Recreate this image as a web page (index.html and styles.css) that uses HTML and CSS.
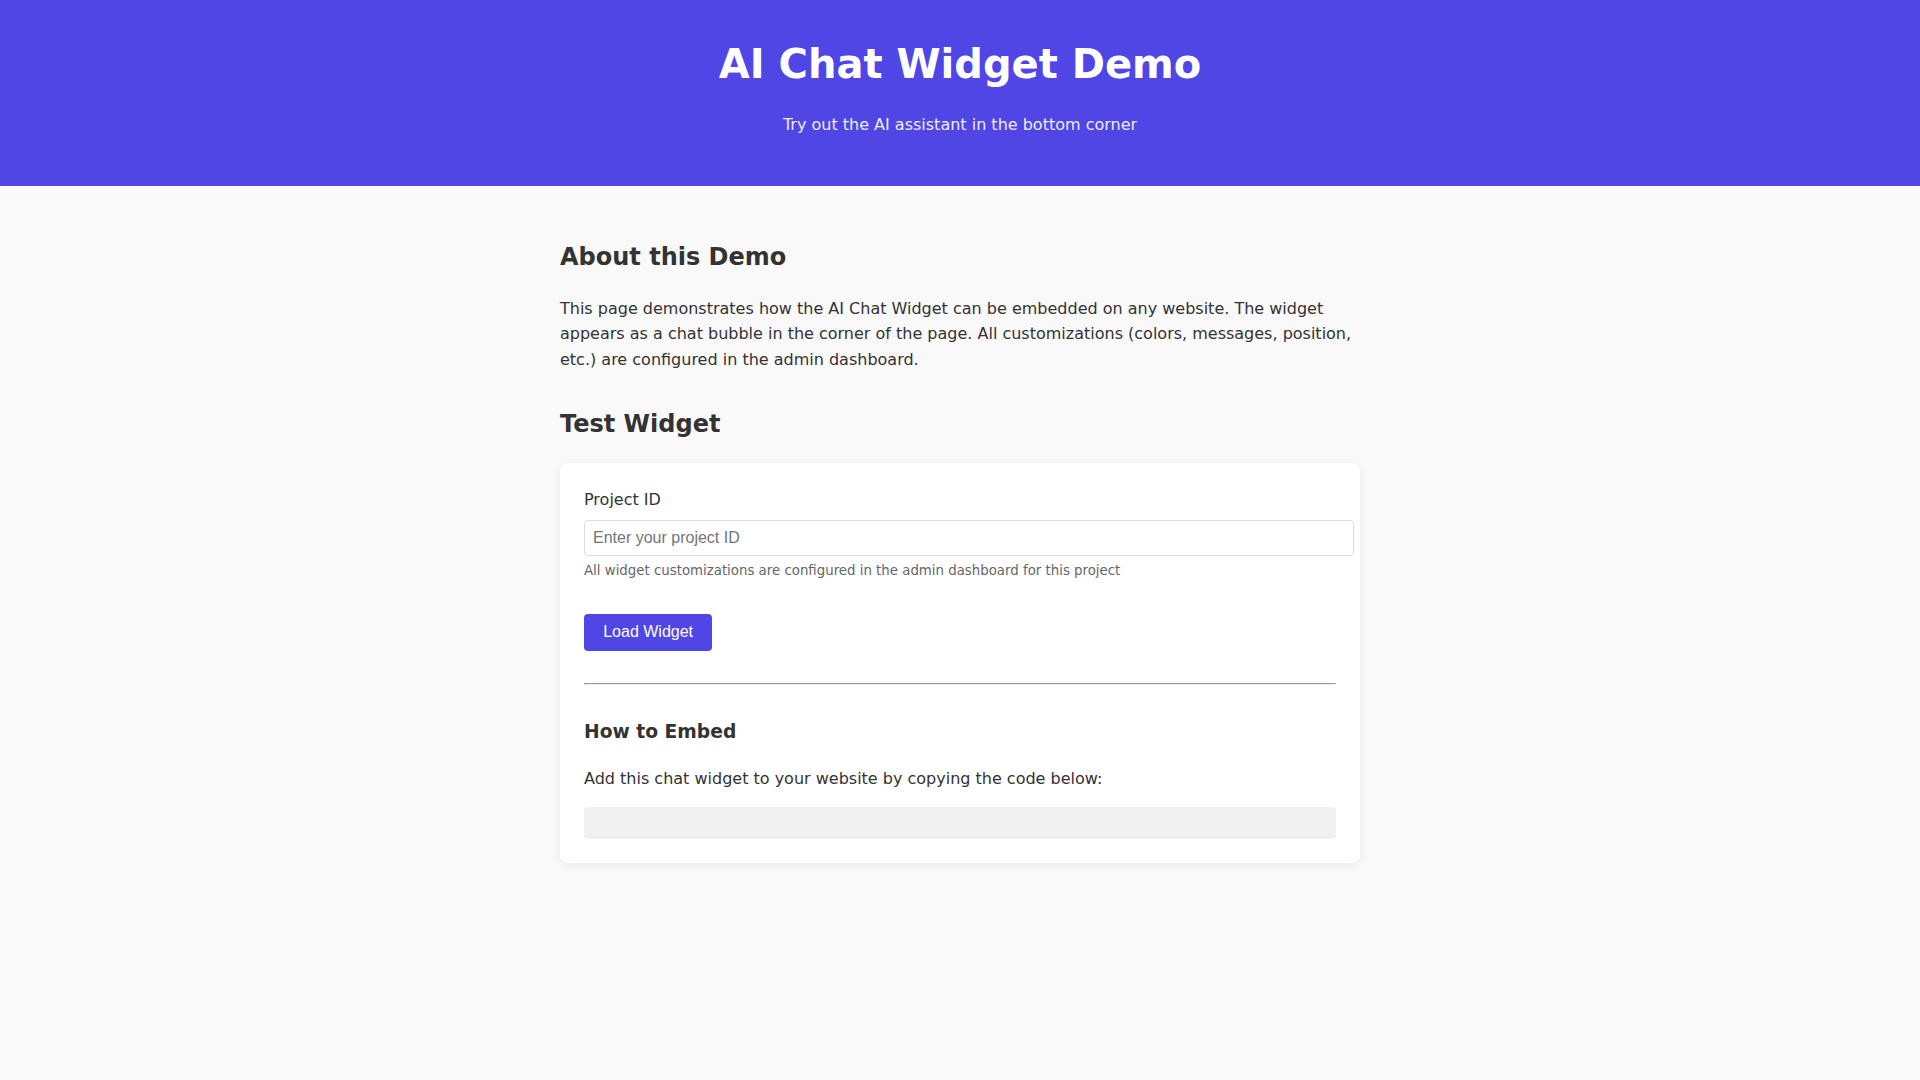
FILE: index.html
```html
<!DOCTYPE html>
<html lang="en">
<head>
    <meta charset="UTF-8">
    <meta name="viewport" content="width=device-width, initial-scale=1.0">
    <title>AI Chat Widget Demo</title>
    <link rel="stylesheet" href="styles.css">
</head>
<body>
    <header class="header">
        <h1>AI Chat Widget Demo</h1>
        <p>Try out the AI assistant in the bottom corner</p>
    </header>

    <main class="container">
        <section class="section">
            <h2>About this Demo</h2>
            <p>This page demonstrates how the AI Chat Widget can be embedded on any website. The widget appears as a chat bubble in the corner of the page. All customizations (colors, messages, position, etc.) are configured in the admin dashboard.</p>
        </section>

        <section class="section">
            <h2>Test Widget</h2>
            <div class="card">
                <div class="form-group">
                    <label for="project-id">Project ID</label>
                    <input type="text" id="project-id" placeholder="Enter your project ID">
                    <small class="hint">All widget customizations are configured in the admin dashboard for this project</small>
                </div>
                <button id="load-button">Load Widget</button>

                <hr>

                <h3>How to Embed</h3>
                <p>Add this chat widget to your website by copying the code below:</p>
                <pre class="code-block" id="embed-code"></pre>
            </div>
        </section>
    </main>
</body>
</html>
```

FILE: styles.css
```css
body {
    font-family: "DejaVu Sans", sans-serif;
    line-height: 1.6;
    color: #333;
    background-color: #f9f9f9;
    margin: 0;
    padding: 0;
}

.header {
    background-color: #4f46e5;
    color: white;
    text-align: center;
    padding: 2rem;
}

.header h1 {
    font-size: 2.5rem;
    margin: 0;
}

.header p {
    margin: 1rem 0;
    opacity: 0.9;
}

.container {
    max-width: 800px;
    margin: 0 auto;
    padding: 2rem 0;
}

.section {
    margin-bottom: 2rem;
}

.card {
    background-color: white;
    border-radius: 8px;
    padding: 24px;
    box-shadow: 0 2px 10px rgba(0, 0, 0, 0.06);
}

.form-group {
    margin-bottom: 2rem;
}

label {
    display: block;
    margin-bottom: 0.5rem;
}

input[type="text"] {
    display: block;
    width: 100%;
    padding: 8px;
    font-size: 1rem;
    font-family: "Liberation Sans", Arial, sans-serif;
    border: 1px solid #ddd;
    border-radius: 4px;
}

.hint {
    display: block;
    margin-top: 0.25rem;
    color: #666;
}

button {
    padding: 0.6rem 1.2rem;
    font-family: "Liberation Sans", Arial, sans-serif;
    font-size: 1rem;
    background-color: #4f46e5;
    color: white;
    border: none;
    border-radius: 4px;
    cursor: pointer;
}

hr {
    margin: 2rem 0;
}

.code-block {
    background-color: #f0f0f0;
    padding: 1rem;
    border-radius: 4px;
    margin: 1rem 0 0;
}
```
